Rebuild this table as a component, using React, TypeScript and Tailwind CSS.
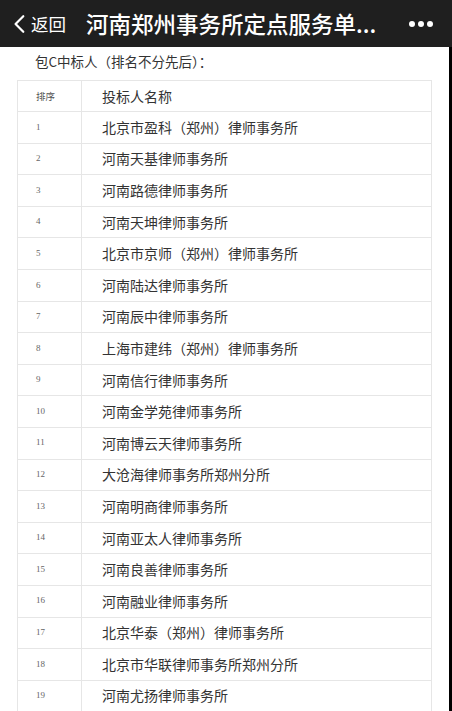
const firms = [
  "北京市盈科（郑州）律师事务所",
  "河南天基律师事务所",
  "河南路德律师事务所",
  "河南天坤律师事务所",
  "北京市京师（郑州）律师事务所",
  "河南陆达律师事务所",
  "河南辰中律师事务所",
  "上海市建纬（郑州）律师事务所",
  "河南信行律师事务所",
  "河南金学苑律师事务所",
  "河南博云天律师事务所",
  "大沧海律师事务所郑州分所",
  "河南明商律师事务所",
  "河南亚太人律师事务所",
  "河南良善律师事务所",
  "河南融业律师事务所",
  "北京华泰（郑州）律师事务所",
  "北京市华联律师事务所郑州分所",
  "河南尤扬律师事务所",
];

const cjk = "font-['Noto_Sans_CJK_SC','Noto_Sans',sans-serif]";

function TopBar() {
  return (
    <div className={`flex h-[47px] items-center bg-[#1f1f1f] text-white ${cjk}`}>
      <svg
        viewBox="0 0 14 22"
        className="ml-[13px] h-[20px] w-[12px]"
        fill="none"
        stroke="currentColor"
        strokeWidth="2.6"
        strokeLinecap="round"
        strokeLinejoin="round"
      >
        <path d="M12 2 L3 11 L12 20" />
      </svg>
      <span className="ml-[6px] text-[17.5px] leading-none">返回</span>
      <span className="ml-[20px] text-[22.5px] leading-none font-medium tracking-[0px]">
        河南郑州事务所定点服务单...
      </span>
      <div className="ml-auto mr-[19px] flex gap-[3px]">
        <span className="h-[6px] w-[6px] rounded-full bg-white" />
        <span className="h-[6px] w-[6px] rounded-full bg-white" />
        <span className="h-[6px] w-[6px] rounded-full bg-white" />
      </div>
    </div>
  );
}

function Row({ no, name }: { no: string; name: string }) {
  return (
    <div className="grid h-[31.6px] grid-cols-[64px_1fr] border-b border-[#e6e6e6]">
      <div className="flex items-center border-r border-[#e6e6e6] pl-[18px] font-['Liberation_Serif',serif] text-[9px] text-[#666]">
        {no}
      </div>
      <div className={`flex items-center pl-[20px] text-[14px] text-[#333] ${cjk}`}>{name}</div>
    </div>
  );
}

export default function App() {
  return (
    <div className="h-[711px] w-[452px] overflow-hidden bg-white">
      <TopBar />
      <div className="flex">
        <div className="flex-1">
          <div className={`h-[33px] pt-[4px] pl-[35px] text-[13.5px] leading-[20px] text-[#333] ${cjk}`}>
            包C中标人（排名不分先后）：
          </div>
          <div className="ml-[17px] w-[415px] border-x border-t border-[#e6e6e6]">
            <div className="grid h-[31px] grid-cols-[64px_1fr] border-b border-[#e6e6e6]">
              <div className={`flex items-center border-r border-[#e6e6e6] pl-[18px] text-[9.5px] text-[#555] ${cjk}`}>
                排序
              </div>
              <div className={`flex items-center pl-[20px] text-[14px] text-[#333] ${cjk}`}>投标人名称</div>
            </div>
            {firms.map((name, i) => (
              <Row key={name} no={String(i + 1)} name={name} />
            ))}
          </div>
        </div>
        <div className="h-[664px] w-[3px] bg-black" />
      </div>
    </div>
  );
}
